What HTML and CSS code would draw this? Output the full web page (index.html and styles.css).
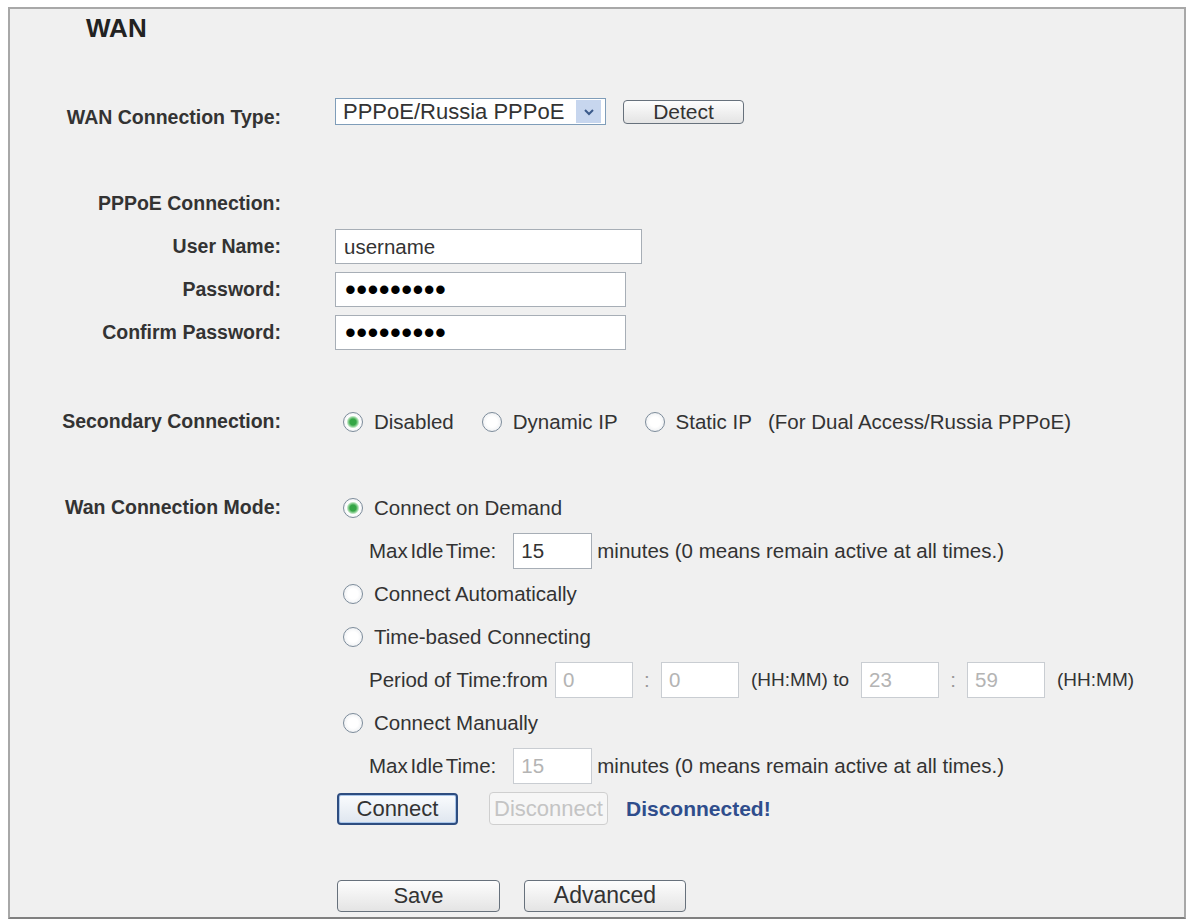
FILE: index.html
```html
<!DOCTYPE html>
<html lang="en">
<head>
  <meta charset="UTF-8">
  <title>WAN</title>
  <link rel="stylesheet" href="styles.css">
</head>
<body>
  <div class="panel">
    <h1 class="title">WAN</h1>

    <div class="row row-type">
      <div class="label">WAN Connection Type:</div>
      <div class="field">
        <div class="select">
          <span class="select-text">PPPoE/Russia PPPoE</span>
          <span class="select-arrow">
            <svg width="12" height="8" viewBox="0 0 12 8"><polyline points="2,2 6,6 10,2" fill="none" stroke="#3b5a8a" stroke-width="2"/></svg>
          </span>
        </div>
        <button class="btn btn-detect">Detect</button>
      </div>
    </div>

    <div class="row row-pppoe">
      <div class="label">PPPoE Connection:</div>
    </div>
    <div class="row">
      <div class="label">User Name:</div>
      <div class="field"><input class="text text-user" type="text" value="username"></div>
    </div>
    <div class="row">
      <div class="label">Password:</div>
      <div class="field"><input class="text text-pass" type="password" value="password1"></div>
    </div>
    <div class="row">
      <div class="label">Confirm Password:</div>
      <div class="field"><input class="text text-pass" type="password" value="password1"></div>
    </div>

    <div class="row row-secondary">
      <div class="label">Secondary Connection:</div>
      <div class="field">
        <label class="opt opt-1"><input class="radio" type="radio" name="sec" checked>Disabled</label>
        <label class="opt opt-2"><input class="radio" type="radio" name="sec">Dynamic IP</label>
        <label class="opt opt-3"><input class="radio" type="radio" name="sec">Static IP</label>
        <span class="note">(For Dual Access/Russia PPPoE)</span>
      </div>
    </div>

    <div class="row row-mode">
      <div class="label">Wan Connection Mode:</div>
      <div class="stack">
        <div class="line">
          <label class="opt"><input class="radio" type="radio" name="mode" checked>Connect on Demand</label>
        </div>
        <div class="line sub">
          <span class="tight">Max Idle Time:</span>
          <input class="text text-small idle" type="text" value="15">
          <span class="after">minutes (0 means remain active at all times.)</span>
        </div>
        <div class="line">
          <label class="opt"><input class="radio" type="radio" name="mode">Connect Automatically</label>
        </div>
        <div class="line">
          <label class="opt"><input class="radio" type="radio" name="mode">Time-based Connecting</label>
        </div>
        <div class="line sub">
          <span>Period of Time:from</span>
          <input class="text text-small off period" type="text" value="0" disabled>
          <span class="colon">:</span>
          <input class="text text-small off period" type="text" value="0" disabled>
          <span class="hhmm">(HH:MM) to</span>
          <input class="text text-small off period" type="text" value="23" disabled>
          <span class="colon">:</span>
          <input class="text text-small off period" type="text" value="59" disabled>
          <span class="hhmm">(HH:MM)</span>
        </div>
        <div class="line">
          <label class="opt"><input class="radio" type="radio" name="mode">Connect Manually</label>
        </div>
        <div class="line sub">
          <span class="tight">Max Idle Time:</span>
          <input class="text text-small off idle" type="text" value="15" disabled>
          <span class="after">minutes (0 means remain active at all times.)</span>
        </div>
        <div class="line">
          <button class="btn btn-connect">Connect</button>
          <button class="btn btn-disconnect" disabled>Disconnect</button>
          <span class="status">Disconnected!</span>
        </div>
      </div>
    </div>

    <div class="row row-save">
      <div></div>
      <div class="field">
        <button class="btn btn-save">Save</button>
        <button class="btn btn-advanced">Advanced</button>
      </div>
    </div>
  </div>
</body>
</html>
```

FILE: styles.css
```css
body {
  margin: 0;
  padding: 0;
  background-color: #fff;
  font-family: "Liberation Sans", Arial, sans-serif;
  font-size: 20.5px;
  color: #333;
}
.panel {
  box-sizing: border-box;
  width: 1178px;
  height: 912px;
  margin: 7px 0 0 8px;
  border: 2px solid #a8a8a8;
  border-bottom-color: #808080;
  background-color: #f0f0f0;
}
.title {
  margin: 0;
  height: 38px;
  line-height: 38px;
  padding-left: 76px;
  font-size: 26px;
  font-weight: bold;
  color: #222;
}
.row {
  display: grid;
  grid-template-columns: 271px auto;
  column-gap: 54px;
  height: 43px;
  align-items: center;
}
.label {
  text-align: right;
  font-weight: bold;
  font-size: 19.5px;
  color: #333;
}
.field {
  display: flex;
  align-items: center;
}
.row-type { margin-top: 49px; }
.row-type .field { margin-bottom: 12px; }
.row-pppoe { margin-top: 43px; }
.row-secondary { margin-top: 46px; }
.row-mode {
  margin-top: 43px;
  height: auto;
  align-items: start;
}
.row-mode .label {
  line-height: 43px;
}
.row-save { margin-top: 44px; }

/* select */
.select {
  box-sizing: border-box;
  width: 271px;
  height: 27px;
  border: 1px solid #7f9db9;
  background-color: #fff;
  display: flex;
  align-items: center;
  justify-content: space-between;
  padding: 0 4px 0 7px;
  font-size: 22px;
}
.select-arrow {
  width: 25px;
  height: 23px;
  background-color: #c7d6ee;
  display: flex;
  align-items: center;
  justify-content: center;
}

/* buttons */
.btn {
  box-sizing: border-box;
  font-family: "Liberation Sans", Arial, sans-serif;
  font-size: 22px;
  line-height: 1;
  color: #333;
  border: 1.5px solid #67717c;
  border-radius: 4px;
  background: linear-gradient(#fdfdfd, #e4e4e4);
  padding: 0;
}
.btn-detect {
  width: 121px;
  height: 24px;
  margin-left: 17px;
  font-size: 21px;
}
.btn-connect {
  width: 121px;
  height: 32px;
  margin-left: 2px;
  border: 2px solid #2e4d80;
  box-shadow: inset 0 0 0 1px #a9c6ea;
  background: linear-gradient(#fafcfe, #dfe6ef);
}
.btn-disconnect {
  width: 119px;
  height: 33px;
  margin-left: 31px;
  border: 1px solid #cfcfcf;
  background: #f6f6f6;
  color: #c4c4c4;
}
.status {
  margin-left: 18px;
  font-weight: bold;
  font-size: 21px;
  color: #2f4d8c;
}
.btn-save {
  width: 163px;
  height: 32px;
  margin-left: 2px;
}
.btn-advanced {
  width: 162px;
  height: 32px;
  margin-left: 24px;
  font-size: 23px;
}

/* text inputs */
.text {
  box-sizing: border-box;
  height: 35px;
  border: 1px solid #a7aeb6;
  background-color: #fff;
  font-family: "Liberation Sans", Arial, sans-serif;
  font-size: 20.5px;
  color: #333;
  padding: 0 8px;
}
.text-user { width: 307px; }
.text-pass {
  width: 291px;
  font-size: 31px;
  letter-spacing: 0.4px;
  padding-left: 9px;
  color: #000;
}
.text-small {
  height: 36px;
  padding: 0 7px;
}
.text.off {
  border-color: #c9cdd2;
  color: #b4b4b4;
  background-color: #fff;
}
.tight { word-spacing: -3px; }
.idle {
  width: 79px;
  margin: 0 5px 0 17px;
}
.period { width: 78px; margin-left: 7px; }
.colon {
  width: 28px;
  text-align: center;
  color: #999;
}
.colon + .period { margin-left: 0; }
.hhmm {
  margin: 0 5px 0 12px;
  font-size: 19px;
}

/* radios */
.opt {
  display: flex;
  align-items: center;
}
.radio {
  appearance: none;
  -webkit-appearance: none;
  box-sizing: border-box;
  width: 20px;
  height: 20px;
  margin: 0 11px 0 8px;
  border: 1px solid #7d8c9b;
  border-radius: 50%;
  background: radial-gradient(circle, #ffffff 40%, #e3e6ea 100%);
}
.radio:checked {
  background: radial-gradient(circle, #35a646 0, #35a646 3px, #9bd7a2 5px, #fff 6.5px, #e3e6ea 100%);
}
.opt-2 .radio { margin-left: 28px; }
.opt-3 .radio { margin-left: 27px; }
.note { margin-left: 16px; }

.stack {
  display: flex;
  flex-direction: column;
}
.line {
  height: 43px;
  display: flex;
  align-items: center;
}
.sub {
  padding-left: 34px;
}
```
